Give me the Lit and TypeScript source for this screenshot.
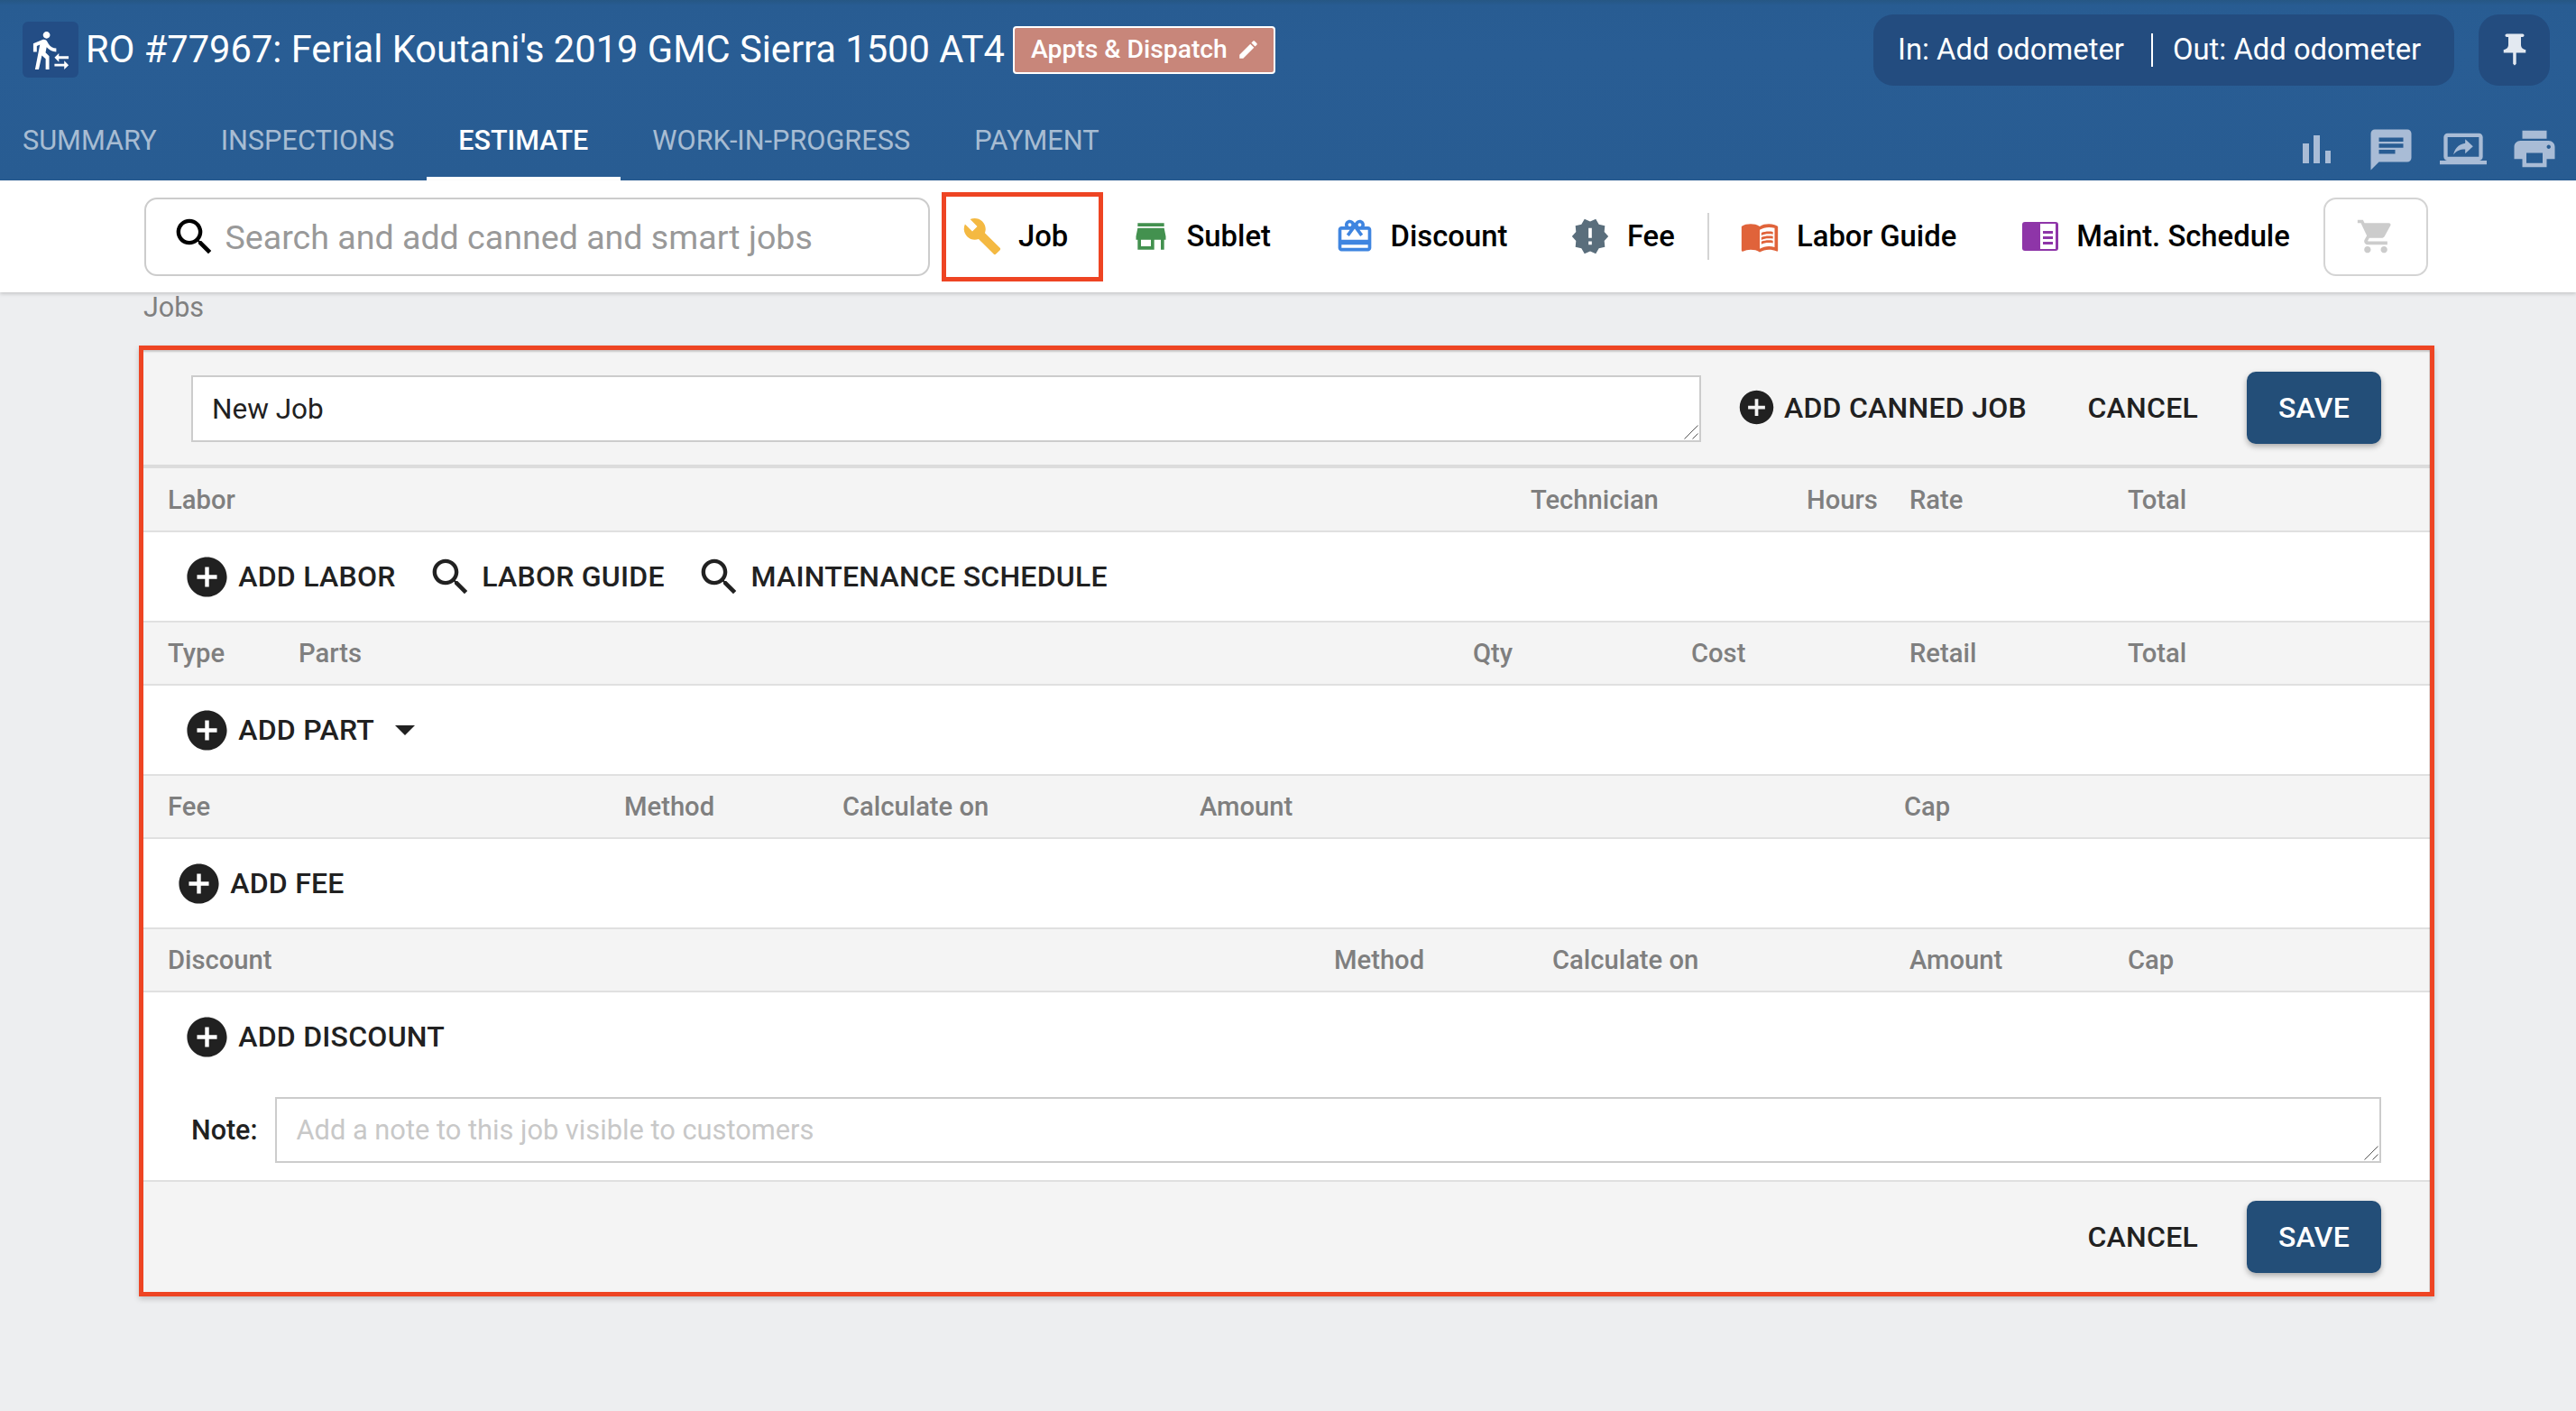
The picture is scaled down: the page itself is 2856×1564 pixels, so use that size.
import { LitElement, html, css } from "lit";
import { customElement } from "lit/decorators.js";

const P = {
  walk: "M16.49 15.5v-1.75L14 16.25l2.49 2.5V17H22v-1.5zm3.02 4.25H14v1.5h5.51V23L22 20.5 19.51 18zM9.5 5.5c1.1 0 2-.9 2-2s-.9-2-2-2-2 .9-2 2 .9 2 2 2zM5.75 8.9L3 23h2.1l1.75-8L9 17v6h2v-7.55L8.95 13.4l.6-3C10.85 12 12.8 13 15 13v-2c-1.85 0-3.45-1-4.35-2.45l-.95-1.6C9.35 6.35 8.7 6 8 6c-.25 0-.5.05-.75.15L2 8.3V13h2V9.65l1.75-.75",
  edit: "M3 17.25V21h3.75L17.81 9.94l-3.75-3.75L3 17.25zM20.71 7.04c.39-.39.39-1.02 0-1.41l-2.34-2.34c-.39-.39-1.02-.39-1.41 0l-1.83 1.83 3.75 3.75 1.83-1.83z",
  pin: "M16 9V4h1c.55 0 1-.45 1-1s-.45-1-1-1H7c-.55 0-1 .45-1 1s.45 1 1 1h1v5c0 1.66-1.34 3-3 3v2h5.97v7l1 1 1-1v-7H19v-2c-1.66 0-3-1.34-3-3z",
  chat: "M20 2H4c-1.1 0-1.99.9-1.99 2L2 22l4-4h14c1.1 0 2-.9 2-2V4c0-1.1-.9-2-2-2zM6 9h12v2H6V9zm8 5H6v-2h8v2zm4-6H6V6h12v2z",
  screen: "M20 18c1.1 0 1.99-.9 1.99-2L22 6c0-1.11-.89-2-2-2H4c-1.11 0-2 .89-2 2v10c0 1.1.89 2 2 2H0v2h24v-2h-4zM4 16V6h16v10.01L4 16zm9-6.87c-3.89.54-5.44 3.2-6 5.87 1.39-1.87 3.22-2.72 6-2.72v2.19l4-3.74L13 7v2.13z",
  print: "M19 8H5c-1.66 0-3 1.34-3 3v6h4v4h12v-4h4v-6c0-1.66-1.34-3-3-3zm-3 11H8v-5h8v5zm3-7c-.55 0-1-.45-1-1s.45-1 1-1 1 .45 1 1-.45 1-1 1zm-1-9H6v4h12V3z",
  search: "M15.5 14h-.79l-.28-.27C15.41 12.59 16 11.11 16 9.5 16 5.91 13.09 3 9.5 3S3 5.91 3 9.5 5.91 16 9.5 16c1.61 0 3.09-.59 4.23-1.57l.27.28v.79l5 4.99L20.49 19l-4.99-5zm-6 0C7.01 14 5 11.99 5 9.5S7.01 5 9.5 5 14 7.01 14 9.5 11.99 14 9.5 14z",
  wrench: "M22.7 19l-9.1-9.1c.9-2.3.4-5-1.5-6.9-2-2-5-2.4-7.4-1.3L9 6 6 9 1.6 4.7C.4 7.1.9 10.1 2.9 12.1c1.9 1.9 4.6 2.4 6.9 1.5l9.1 9.1c.4.4 1 .4 1.4 0l2.3-2.3c.5-.4.5-1.1.1-1.4z",
  store: "M20 4H4v2h16V4zm1 10v-2l-1-5H4l-1 5v2h1v6h10v-6h4v6h2v-6h1zm-9 4H6v-4h6v4z",
  gift: "M20 6h-2.18c.11-.31.18-.65.18-1 0-1.66-1.34-3-3-3-1.05 0-1.96.54-2.5 1.35l-.5.67-.5-.68C10.96 2.54 10.05 2 9 2 7.34 2 6 3.34 6 5c0 .35.07.69.18 1H4c-1.11 0-1.99.89-1.99 2L2 19c0 1.11.89 2 2 2h16c1.11 0 2-.89 2-2V8c0-1.11-.89-2-2-2zm-5-2c.55 0 1 .45 1 1s-.45 1-1 1-1-.45-1-1 .45-1 1-1zM9 4c.55 0 1 .45 1 1s-.45 1-1 1-1-.45-1-1 .45-1 1-1zm11 15H4v-2h16v2zm0-5H4V8h5.08L7 10.83 8.62 12 11 8.76l1-1.36 1 1.36L15.38 12 17 10.83 14.92 8H20v6z",
  fee: "M23 12l-2.44-2.78.34-3.68-3.61-.82-1.89-3.18L12 3 8.6 1.54 6.71 4.72l-3.61.81.34 3.68L1 12l2.44 2.78-.34 3.69 3.61.82 1.89 3.18L12 21l3.4 1.46 1.89-3.18 3.61-.82-.34-3.68L23 12zm-10 5h-2v-2h2v2zm0-4h-2V7h2v6z",
  book: "M21 5c-1.11-.35-2.33-.5-3.5-.5-1.95 0-4.05.4-5.5 1.5-1.45-1.1-3.55-1.5-5.5-1.5S2.45 4.9 1 6v14.65c0 .25.25.5.5.5.1 0 .15-.05.25-.05C3.1 20.45 5.05 20 6.5 20c1.95 0 4.05.4 5.5 1.5 1.35-.85 3.8-1.5 5.5-1.5 1.65 0 3.35.3 4.75 1.05.1.05.15.05.25.05.25 0 .5-.25.5-.5V6c-.6-.45-1.25-.75-2-1zm0 13.5c-1.1-.35-2.3-.5-3.5-.5-1.7 0-4.15.65-5.5 1.5V8c1.35-.85 3.8-1.5 5.5-1.5 1.2 0 2.4.15 3.5.5v11.5zM17.5 10.5c.88 0 1.73.09 2.5.26V9.24c-.79-.15-1.64-.24-2.5-.24-1.7 0-3.24.29-4.5.83v1.66c1.13-.64 2.7-.99 4.5-.99zM13 12.49v1.66c1.13-.64 2.7-.99 4.5-.99.88 0 1.73.09 2.5.26V11.9c-.79-.15-1.64-.24-2.5-.24-1.7 0-3.24.3-4.5.83zM17.5 14.33c-1.7 0-3.24.29-4.5.83v1.66c1.13-.64 2.7-.99 4.5-.99.88 0 1.73.09 2.5.26v-1.52c-.79-.16-1.64-.24-2.5-.24z",
  cart: "M7 18c-1.1 0-1.99.9-1.99 2S5.9 22 7 22s2-.9 2-2-.9-2-2-2zM1 2v2h2l3.6 7.59-1.35 2.45c-.16.28-.25.61-.25.96 0 1.1.9 2 2 2h12v-2H7.42c-.14 0-.25-.11-.25-.25l.03-.12.9-1.63h7.45c.75 0 1.41-.41 1.75-1.03l3.58-6.49c.08-.14.12-.31.12-.48 0-.55-.45-1-1-1H5.21l-.94-2H1zm16 16c-1.1 0-1.99.9-1.99 2s.89 2 1.99 2 2-.9 2-2-.9-2-2-2z",
  add: "M12 2C6.48 2 2 6.48 2 12s4.48 10 10 10 10-4.48 10-10S17.52 2 12 2zm5 11h-4v4h-2v-4H7v-2h4V7h2v4h4v2z",
};

const icon = (d: string, cls: string) =>
  html`<svg class=${cls} viewBox="0 0 24 24" fill="currentColor"><path d=${d}></path></svg>`;

const grip = html`<svg class="grip" viewBox="0 0 16 16" fill="none" stroke="#555" stroke-width="1">
  <path d="M15.5 .5 L.5 15.5M15.5 9.5 L9.5 15.5"></path>
</svg>`;

type Col = [string, number];
const headers: { first?: boolean; cols: Col[] }[] = [
  { first: true, cols: [["Labor", 1511], ["Technician", 306], ["Hours", 114], ["Rate", 242], ["Total", 0]] },
  { cols: [["Type", 145], ["Parts", 1302], ["Qty", 242], ["Cost", 242], ["Retail", 242], ["Total", 0]] },
  { cols: [["Fee", 506], ["Method", 242], ["Calculate on", 396], ["Amount", 781], ["Cap", 0]] },
  { cols: [["Discount", 1293], ["Method", 242], ["Calculate on", 396], ["Amount", 242], ["Cap", 0]] },
];

@customElement("app-root")
export class AppRoot extends LitElement {
  static styles = css`
    :host {
      display: block;
      width: 2856px;
      height: 1564px;
      background: #edeef0;
      font-family: Roboto, "Liberation Sans", sans-serif;
      overflow: hidden;
      color: #212121;
    }
    header {
      height: 200px;
      background: linear-gradient(#265784 0, #285c92 6px, #295d94 60px, #285c92 100%);
      color: #fff;
    }
    .top {
      height: 110px;
      display: flex;
      align-items: center;
      padding-left: 25px;
      padding-right: 29px;
    }
    .walk-box {
      width: 62px;
      height: 62px;
      border-radius: 6px;
      background: #234d85;
      display: flex;
      align-items: center;
      justify-content: center;
    }
    .walk { width: 47px; height: 47px; }
    .title {
      font-size: 41.65px;
      margin-left: 8px;
      margin-top: -2px;
      white-space: nowrap;
    }
    .badge {
      margin-left: 9px;
      margin-top: 1px;
      box-sizing: border-box;
      width: 291px;
      height: 53px;
      border: 2px solid #fff;
      border-radius: 4px;
      background: #c8867a;
      font-size: 28.3px;
      font-weight: 500;
      display: flex;
      align-items: center;
      padding: 0 0 2px 18px;
      gap: 10px;
      white-space: nowrap;
    }
    .pencil { width: 26px; height: 26px; flex: none; }
    .spacer { flex: 1; }
    .odo {
      width: 644px;
      height: 79px;
      box-sizing: border-box;
      background: #234c7f;
      border-radius: 22px;
      display: flex;
      align-items: center;
      padding-left: 27px;
      font-size: 32.8px;
      white-space: nowrap;
    }
    .odo i {
      width: 2px;
      height: 37px;
      background: #fff;
      margin: 0 22px 0 30px;
      flex: none;
    }
    .pin-box {
      margin-left: 27px;
      width: 79px;
      height: 79px;
      background: #234c7f;
      border-radius: 22px;
      display: flex;
      align-items: center;
      justify-content: center;
      color: #e3e9f1;
    }
    .pin { width: 42px; height: 42px; }
    .tabs-row {
      height: 90px;
      display: flex;
      justify-content: space-between;
      padding-right: 19.5px;
    }
    .tabs { display: flex; margin-left: -10.5px; }
    .tab {
      box-sizing: border-box;
      padding: 0 35.5px;
      height: 90px;
      display: flex;
      align-items: center;
      font-size: 30.7px;
      color: rgba(255, 255, 255, 0.6);
      white-space: nowrap;
    }
    .tab.on {
      color: #fff;
      border-bottom: 4px solid #fff;
      padding-top: 4px;
      font-weight: 500;
      font-size: 30.5px;
    }
    .actions {
      display: flex;
      align-items: flex-start;
      color: #a9bcd6;
    }
    .bars { width: 31px; height: 31px; margin-top: 40px; }
    .chat { width: 54px; height: 54px; margin: 28.5px 0 0 40px; }
    .screen { width: 52px; height: 52px; margin: 29.3px 0 0 27px; }
    .print { width: 54px; height: 54px; margin: 28.25px 0 0 26px; }

    .toolbar {
      height: 124px;
      background: #fff;
      box-shadow: 0 2px 4px rgba(0, 0, 0, 0.16);
      display: flex;
      align-items: center;
      padding-left: 160px;
      position: relative;
      font-size: 32.8px;
      font-weight: 500;
      color: #000;
    }
    .search {
      width: 871px;
      height: 87px;
      box-sizing: border-box;
      border: 2px solid #ccc;
      border-radius: 14px;
      display: flex;
      align-items: center;
      padding: 1px 0 0 26.5px;
      color: #999;
      font-size: 37.6px;
      font-weight: 400;
      white-space: nowrap;
    }
    .search svg { width: 53px; height: 53px; color: #000; margin: -1px 8px 0 0; flex: none; }
    .tool { display: flex; align-items: center; white-space: nowrap; }
    .tool svg { flex: none; }
    .job {
      box-sizing: border-box;
      width: 179px;
      height: 99px;
      border: 5px solid #ee4423;
      margin: 0 36px 0 13px;
      padding-left: 18px;
    }
    .wrench { width: 44px; height: 44px; color: #f4b942; margin-right: 18px; }
    .store { width: 44px; height: 44px; color: #43914f; margin: 0 17.5px 0 -5px; }
    .gift { width: 44px; height: 44px; color: #3f85e0; margin: 0 17.7px 0 71px; }
    .fee { width: 44px; height: 44px; color: #5a6e7c; margin: 0 19px 0 69.5px; }
    .book { width: 44px; height: 44px; color: #e0633a; margin: 0 18.8px 0 34.5px; }
    .maint { width: 40px; height: 32px; margin: 0 20px 0 73px; }
    .sep { width: 2px; height: 52px; background: #d4d4d4; margin-left: 36px; flex: none; }
    .cart-box {
      box-sizing: border-box;
      width: 116px;
      height: 87px;
      margin-left: 37px;
      border: 2px solid #d4d4d4;
      border-radius: 14px;
      display: flex;
      align-items: center;
      justify-content: center;
      color: #ccc;
      flex: none;
    }
    .cart { width: 44px; height: 44px; }

    .jobs-label {
      box-sizing: border-box;
      height: 59px;
      padding: 1px 0 0 159px;
      font-size: 30.5px;
      line-height: 32px;
      color: #808080;
    }
    .card {
      margin: 0 157px 0 154px;
      border: 5px solid #ee4423;
      background: #f4f4f4;
      box-shadow: 0 3px 6px rgba(0, 0, 0, 0.18);
      position: relative;
    }
    .card::after {
      content: "";
      position: absolute;
      inset: 0;
      box-shadow: inset 0 3px 2px -1px rgba(0, 0, 0, 0.18), inset -1px 0 0 rgba(0, 0, 0, 0.12);
      pointer-events: none;
    }
    .jobbar {
      box-sizing: border-box;
      height: 131px;
      border-bottom: 4px solid #dcdcdc;
      display: flex;
      align-items: center;
      padding-left: 53px;
    }
    .ta { position: relative; flex: none; }
    .grip { position: absolute; right: 3px; bottom: 3px; width: 16px; height: 16px; pointer-events: none; }
    textarea {
      box-sizing: border-box;
      border: 2px solid #ccc;
      background: #fff;
      border-radius: 0;
      outline: none;
      resize: none;
      font-family: inherit;
      color: #212121;
      padding: 17px 21px;
      line-height: 36px;
      margin: 0;
      display: block;
      width: 100%;
      height: 100%;
    }
    textarea::placeholder { color: #c8c8c8; opacity: 1; }
    .name-wrap { width: 1674px; height: 74px; margin-top: 2px; }
    .name-wrap textarea { font-size: 31.5px; padding-top: 18px; }
    .btn {
      font-size: 32px;
      font-weight: 500;
      letter-spacing: 0.25px;
      white-space: nowrap;
      display: flex;
      align-items: center;
    }
    .canned { margin-left: 39px; gap: 8px; }
    .canned svg { width: 45px; height: 45px; flex: none; }
    .cancel { margin-left: 73px; }
    .jobbar .cancel { margin-left: 67.5px; }
    .save {
      width: 149px;
      height: 80px;
      margin-left: 54px;
      background: #234e78;
      color: #fff;
      border-radius: 10px;
      justify-content: center;
      box-shadow: 0 3px 6px rgba(0, 0, 0, 0.3);
      flex: none;
    }
    .head {
      box-sizing: border-box;
      height: 70px;
      border-bottom: 2px solid #e0e0e0;
      padding-left: 27px;
      display: grid;
      align-items: center;
      font-size: 29.2px;
      font-weight: 500;
      color: #7f7f7f;
    }
    .head.first { height: 71px; }
    .row {
      box-sizing: border-box;
      height: 100px;
      background: #fff;
      border-bottom: 2px solid #e0e0e0;
      display: flex;
      align-items: center;
      padding-left: 43.6px;
      gap: 34px;
    }
    .row.fee-row { padding-left: 34.6px; }
    .row .btn { gap: 8.6px; }
    .row .btn svg { width: 53px; height: 53px; flex: none; }
    .caret {
      width: 0;
      height: 0;
      border-left: 11px solid transparent;
      border-right: 11px solid transparent;
      border-top: 11px solid #212121;
      margin-left: 14px;
    }
    .discount {
      box-sizing: border-box;
      height: 210px;
      background: #fff;
      border-bottom: 2px solid #e0e0e0;
    }
    .discount .row { height: 98px; border: none; background: none; }
    .note-row {
      display: flex;
      align-items: center;
      padding-left: 53px;
      margin-top: 18px;
    }
    .note-row label { font-size: 30.5px; font-weight: 500; width: 92.5px; flex: none; }
    .note-wrap { width: 2335.5px; height: 73px; }
    .note-wrap textarea { font-size: 30.8px; padding-left: 22px; }
    .foot {
      height: 122px;
      display: flex;
      align-items: center;
      justify-content: flex-end;
      padding-right: 54px;
    }
  `;

  private head(h: { first?: boolean; cols: Col[] }) {
    const tpl = h.cols.map(([, w]) => (w ? `${w}px` : "1fr")).join(" ");
    return html`<div class="head ${h.first ? "first" : ""}" style="grid-template-columns:${tpl}">
      ${h.cols.map(([t]) => html`<span>${t}</span>`)}
    </div>`;
  }

  render() {
    return html`
      <header>
        <div class="top">
          <div class="walk-box">${icon(P.walk, "walk")}</div>
          <div class="title">RO #77967: Ferial Koutani's 2019 GMC Sierra 1500 AT4</div>
          <div class="badge">Appts &amp; Dispatch ${icon(P.edit, "pencil")}</div>
          <div class="spacer"></div>
          <div class="odo"><span>In: Add odometer</span><i></i><span>Out: Add odometer</span></div>
          <div class="pin-box">${icon(P.pin, "pin")}</div>
        </div>
        <div class="tabs-row">
          <div class="tabs">
            <div class="tab">SUMMARY</div>
            <div class="tab">INSPECTIONS</div>
            <div class="tab on">ESTIMATE</div>
            <div class="tab">WORK-IN-PROGRESS</div>
            <div class="tab">PAYMENT</div>
          </div>
          <div class="actions">
            <svg class="bars" viewBox="0 0 31 31" fill="currentColor">
              <rect x="0" y="9" width="7" height="22"></rect>
              <rect x="12" y="0" width="7" height="31"></rect>
              <rect x="25" y="17" width="6" height="14"></rect>
            </svg>
            ${icon(P.chat, "chat")}${icon(P.screen, "screen")}${icon(P.print, "print")}
          </div>
        </div>
      </header>
      <div class="toolbar">
        <div class="search">${icon(P.search, "")}Search and add canned and smart jobs</div>
        <div class="tool job">${icon(P.wrench, "wrench")}Job</div>
        <div class="tool">${icon(P.store, "store")}Sublet</div>
        <div class="tool">${icon(P.gift, "gift")}Discount</div>
        <div class="tool">${icon(P.fee, "fee")}Fee</div>
        <div class="sep"></div>
        <div class="tool">${icon(P.book, "book")}Labor Guide</div>
        <div class="tool">
          <svg class="maint" viewBox="0 0 40 32">
            <rect width="40" height="32" rx="3" fill="#8e35a8"></rect>
            <rect x="20" y="2" width="17" height="28" fill="#fff"></rect>
            <rect x="23" y="10" width="11" height="3" fill="#8e35a8"></rect>
            <rect x="23" y="16" width="11" height="3" fill="#8e35a8"></rect>
            <rect x="23" y="22" width="11" height="3" fill="#8e35a8"></rect>
          </svg>
          Maint. Schedule
        </div>
        <div class="cart-box">${icon(P.cart, "cart")}</div>
      </div>
      <div class="jobs-label">Jobs</div>
      <div class="card">
        <div class="jobbar">
          <div class="ta name-wrap"><textarea .value=${"New Job"}></textarea>${grip}</div>
          <div class="btn canned">${icon(P.add, "")}ADD CANNED JOB</div>
          <div class="btn cancel">CANCEL</div>
          <div class="btn save">SAVE</div>
        </div>
        ${this.head(headers[0])}
        <div class="row">
          <div class="btn">${icon(P.add, "")}ADD LABOR</div>
          <div class="btn">${icon(P.search, "")}LABOR GUIDE</div>
          <div class="btn">${icon(P.search, "")}MAINTENANCE SCHEDULE</div>
        </div>
        ${this.head(headers[1])}
        <div class="row">
          <div class="btn">${icon(P.add, "")}ADD PART<span class="caret"></span></div>
        </div>
        ${this.head(headers[2])}
        <div class="row fee-row">
          <div class="btn">${icon(P.add, "")}ADD FEE</div>
        </div>
        ${this.head(headers[3])}
        <div class="discount">
          <div class="row">
            <div class="btn">${icon(P.add, "")}ADD DISCOUNT</div>
          </div>
          <div class="note-row">
            <label>Note:</label>
            <div class="ta note-wrap"><textarea placeholder="Add a note to this job visible to customers"></textarea>${grip}</div>
          </div>
        </div>
        <div class="foot">
          <div class="btn cancel">CANCEL</div>
          <div class="btn save">SAVE</div>
        </div>
      </div>
    `;
  }
}
